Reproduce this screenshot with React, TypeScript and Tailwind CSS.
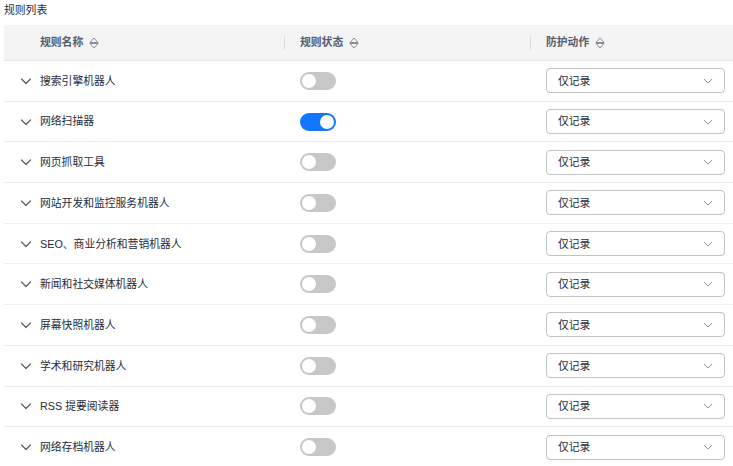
import { useState } from 'react';

// 规则数据
const RULES: { name: string; enabled: boolean }[] = [
  { name: '搜索引擎机器人', enabled: false },
  { name: '网络扫描器', enabled: true },
  { name: '网页抓取工具', enabled: false },
  { name: '网站开发和监控服务机器人', enabled: false },
  { name: 'SEO、商业分析和营销机器人', enabled: false },
  { name: '新闻和社交媒体机器人', enabled: false },
  { name: '屏幕快照机器人', enabled: false },
  { name: '学术和研究机器人', enabled: false },
  { name: 'RSS 提要阅读器', enabled: false },
  { name: '网络存档机器人', enabled: false },
];

function SortIcon() {
  return (
    <svg width="10" height="12" viewBox="0 0 10 12" className="ml-[6px] shrink-0" fill="none">
      <path d="M1 5.5 L5 1 L9 5.5 Z" stroke="#8a8e99" strokeWidth="1" strokeLinejoin="round" />
      <path d="M1 6.5 L5 11 L9 6.5 Z" stroke="#8a8e99" strokeWidth="1" strokeLinejoin="round" />
    </svg>
  );
}

function Chevron({ size = 12, color = '#575d6c' }: { size?: number; color?: string }) {
  return (
    <svg width={size} height={size} viewBox="0 0 12 12" fill="none">
      <path d="M1.5 4 L6 8.5 L10.5 4" stroke={color} strokeWidth="1.2" strokeLinecap="round" strokeLinejoin="round" />
    </svg>
  );
}

function Toggle({ on, onClick }: { on: boolean; onClick: () => void }) {
  return (
    <button
      onClick={onClick}
      className={`relative w-[36px] h-[18px] rounded-full transition-colors ${on ? 'bg-[#1476ff]' : 'bg-[#c7c7c7]'}`}
    >
      <span
        className={`absolute top-[2px] w-[14px] h-[14px] rounded-full bg-white transition-all ${on ? 'left-[20px]' : 'left-[2px]'}`}
      />
    </button>
  );
}

export default function App() {
  const [rules, setRules] = useState(RULES);

  const toggle = (i: number) => {
    setRules((r) => r.map((x, j) => (j === i ? { ...x, enabled: !x.enabled } : x)));
  };

  return (
    <div
      className="w-[733px] h-[466px] bg-white overflow-hidden text-[10.8px] text-[#252b3a]"
      style={{ fontFamily: '"Liberation Sans", "Noto Sans CJK SC", sans-serif' }}
    >
      {/* 标题 */}
      <div className="h-[25px] pl-[4px] pt-[2px] leading-[16px] text-[#252b3a]">规则列表</div>

      <div className="ml-[4px]">
        {/* 表头 */}
        <div className="flex h-[36px] bg-[#f4f4f4] border-b border-[#e8e8e8] font-semibold text-[#575d6c]">
          <div className="w-[280px] flex items-center pl-[36px]">
            规则名称
            <SortIcon />
          </div>
          <div className="w-[246px] flex items-center pl-[16px] relative">
            <span className="absolute left-0 top-[11px] h-[14px] w-px bg-[#dcdcdc]" />
            规则状态
            <SortIcon />
          </div>
          <div className="flex-1 flex items-center pl-[16px] relative">
            <span className="absolute left-0 top-[11px] h-[14px] w-px bg-[#dcdcdc]" />
            防护动作
            <SortIcon />
          </div>
        </div>

        {/* 数据行 */}
        {rules.map((rule, i) => (
          <div key={rule.name} className="flex h-[40.7px] border-b border-[#ececec] items-center">
            <div className="w-[280px] flex items-center pl-[16px] gap-[8px]">
              <Chevron />
              <span>{rule.name}</span>
            </div>
            <div className="w-[246px] flex items-center pl-[16px]">
              <Toggle on={rule.enabled} onClick={() => toggle(i)} />
            </div>
            <div className="flex-1 flex items-center pl-[16px]">
              <div className="w-[179px] h-[25px] border border-[#c2c2c2] rounded-[4px] flex items-center justify-between pl-[11px] pr-[11px]">
                <span>仅记录</span>
                <Chevron size={10} color="#8a8e99" />
              </div>
            </div>
          </div>
        ))}
      </div>
    </div>
  );
}
